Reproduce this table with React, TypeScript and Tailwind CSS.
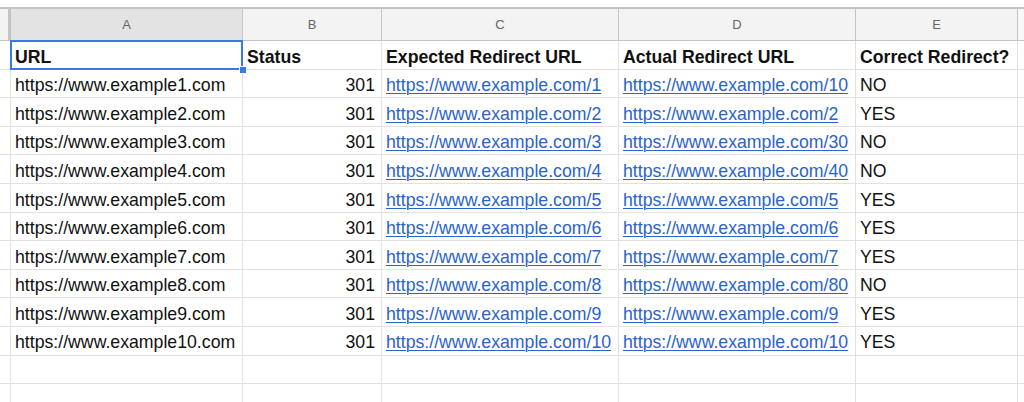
import React from "react";

const rows: [string, string, string, string][] = [
  ["https://www.example1.com", "https://www.example.com/1", "https://www.example.com/10", "NO"],
  ["https://www.example2.com", "https://www.example.com/2", "https://www.example.com/2", "YES"],
  ["https://www.example3.com", "https://www.example.com/3", "https://www.example.com/30", "NO"],
  ["https://www.example4.com", "https://www.example.com/4", "https://www.example.com/40", "NO"],
  ["https://www.example5.com", "https://www.example.com/5", "https://www.example.com/5", "YES"],
  ["https://www.example6.com", "https://www.example.com/6", "https://www.example.com/6", "YES"],
  ["https://www.example7.com", "https://www.example.com/7", "https://www.example.com/7", "YES"],
  ["https://www.example8.com", "https://www.example.com/8", "https://www.example.com/80", "NO"],
  ["https://www.example9.com", "https://www.example.com/9", "https://www.example.com/9", "YES"],
  ["https://www.example10.com", "https://www.example.com/10", "https://www.example.com/10", "YES"],
];

const cell = "h-full flex items-center border-r border-[#e2e2e2] overflow-hidden whitespace-nowrap pt-[4px]";
const link = "text-[#2a63cf] underline decoration-[1px] underline-offset-[2px]";

function Row({ children }: { children: React.ReactNode }) {
  return (
    <div className="flex h-[28.6px] border-b border-[#e2e2e2] shrink-0">
      <div className="w-[11px] h-full border-r border-[#e2e2e2] shrink-0" />
      {children}
      <div className="flex-1 h-full" />
    </div>
  );
}

export default function App() {
  return (
    <div
      className="w-[1024px] h-[402px] overflow-hidden bg-white text-[17.7px] text-[#111]"
      style={{ fontFamily: '"Liberation Sans", Arial, sans-serif' }}
    >
      <div className="h-[7px] bg-white" />
      {/* column header */}
      <div className="flex h-[34px] border-t-2 border-b border-[#c4c4c4] bg-[#f3f3f3] text-[13px] text-[#666]">
        <div className="w-[11px] h-full shrink-0 flex">
          <div className="w-[8px] h-full bg-[#f3f3f3]" />
          <div className="w-[3px] h-full bg-[#c4c4c4]" />
        </div>
        <div className="w-[232px] shrink-0 h-full bg-[#e3e3e3] border-r border-[#c4c4c4] flex items-center justify-center">A</div>
        <div className="w-[139px] shrink-0 h-full border-r border-[#c4c4c4] flex items-center justify-center">B</div>
        <div className="w-[237px] shrink-0 h-full border-r border-[#c4c4c4] flex items-center justify-center">C</div>
        <div className="w-[237px] shrink-0 h-full border-r border-[#c4c4c4] flex items-center justify-center">D</div>
        <div className="w-[162px] shrink-0 h-full border-r border-[#c4c4c4] flex items-center justify-center">E</div>
        <div className="flex-1 h-full bg-[#f8f8f8]" />
      </div>

      <Row>
        <div className={`${cell} w-[232px] shrink-0 pl-[4px] font-bold relative overflow-visible`}>
          URL
          <div className="absolute -top-[1px] -left-[1px] -right-[1px] -bottom-[1px] border-2 border-[#3b78e7]" />
          <div className="absolute -right-[5px] -bottom-[5px] w-[8px] h-[8px] bg-[#3b78e7] border border-white z-10" />
        </div>
        <div className={`${cell} w-[139px] shrink-0 pl-[4px] font-bold`}>Status</div>
        <div className={`${cell} w-[237px] shrink-0 pl-[4px] font-bold`}>Expected Redirect URL</div>
        <div className={`${cell} w-[237px] shrink-0 pl-[4px] font-bold`}>Actual Redirect URL</div>
        <div className={`${cell} w-[162px] shrink-0 pl-[4px] font-bold`}>Correct Redirect?</div>
      </Row>

      {rows.map(([url, exp, act, ok]) => (
        <Row key={url}>
          <div className={`${cell} w-[232px] shrink-0 pl-[4px]`}>{url}</div>
          <div className={`${cell} w-[139px] shrink-0 pr-[6px] justify-end`}>301</div>
          <div className={`${cell} w-[237px] shrink-0 pl-[4px]`}>
            <span className={link}>{exp}</span>
          </div>
          <div className={`${cell} w-[237px] shrink-0 pl-[4px]`}>
            <span className={link}>{act}</span>
          </div>
          <div className={`${cell} w-[162px] shrink-0 pl-[4px]`}>{ok}</div>
        </Row>
      ))}

      {[0, 1].map((i) => (
        <Row key={i}>
          <div className={`${cell} w-[232px] shrink-0`} />
          <div className={`${cell} w-[139px] shrink-0`} />
          <div className={`${cell} w-[237px] shrink-0`} />
          <div className={`${cell} w-[237px] shrink-0`} />
          <div className={`${cell} w-[162px] shrink-0`} />
        </Row>
      ))}
    </div>
  );
}
